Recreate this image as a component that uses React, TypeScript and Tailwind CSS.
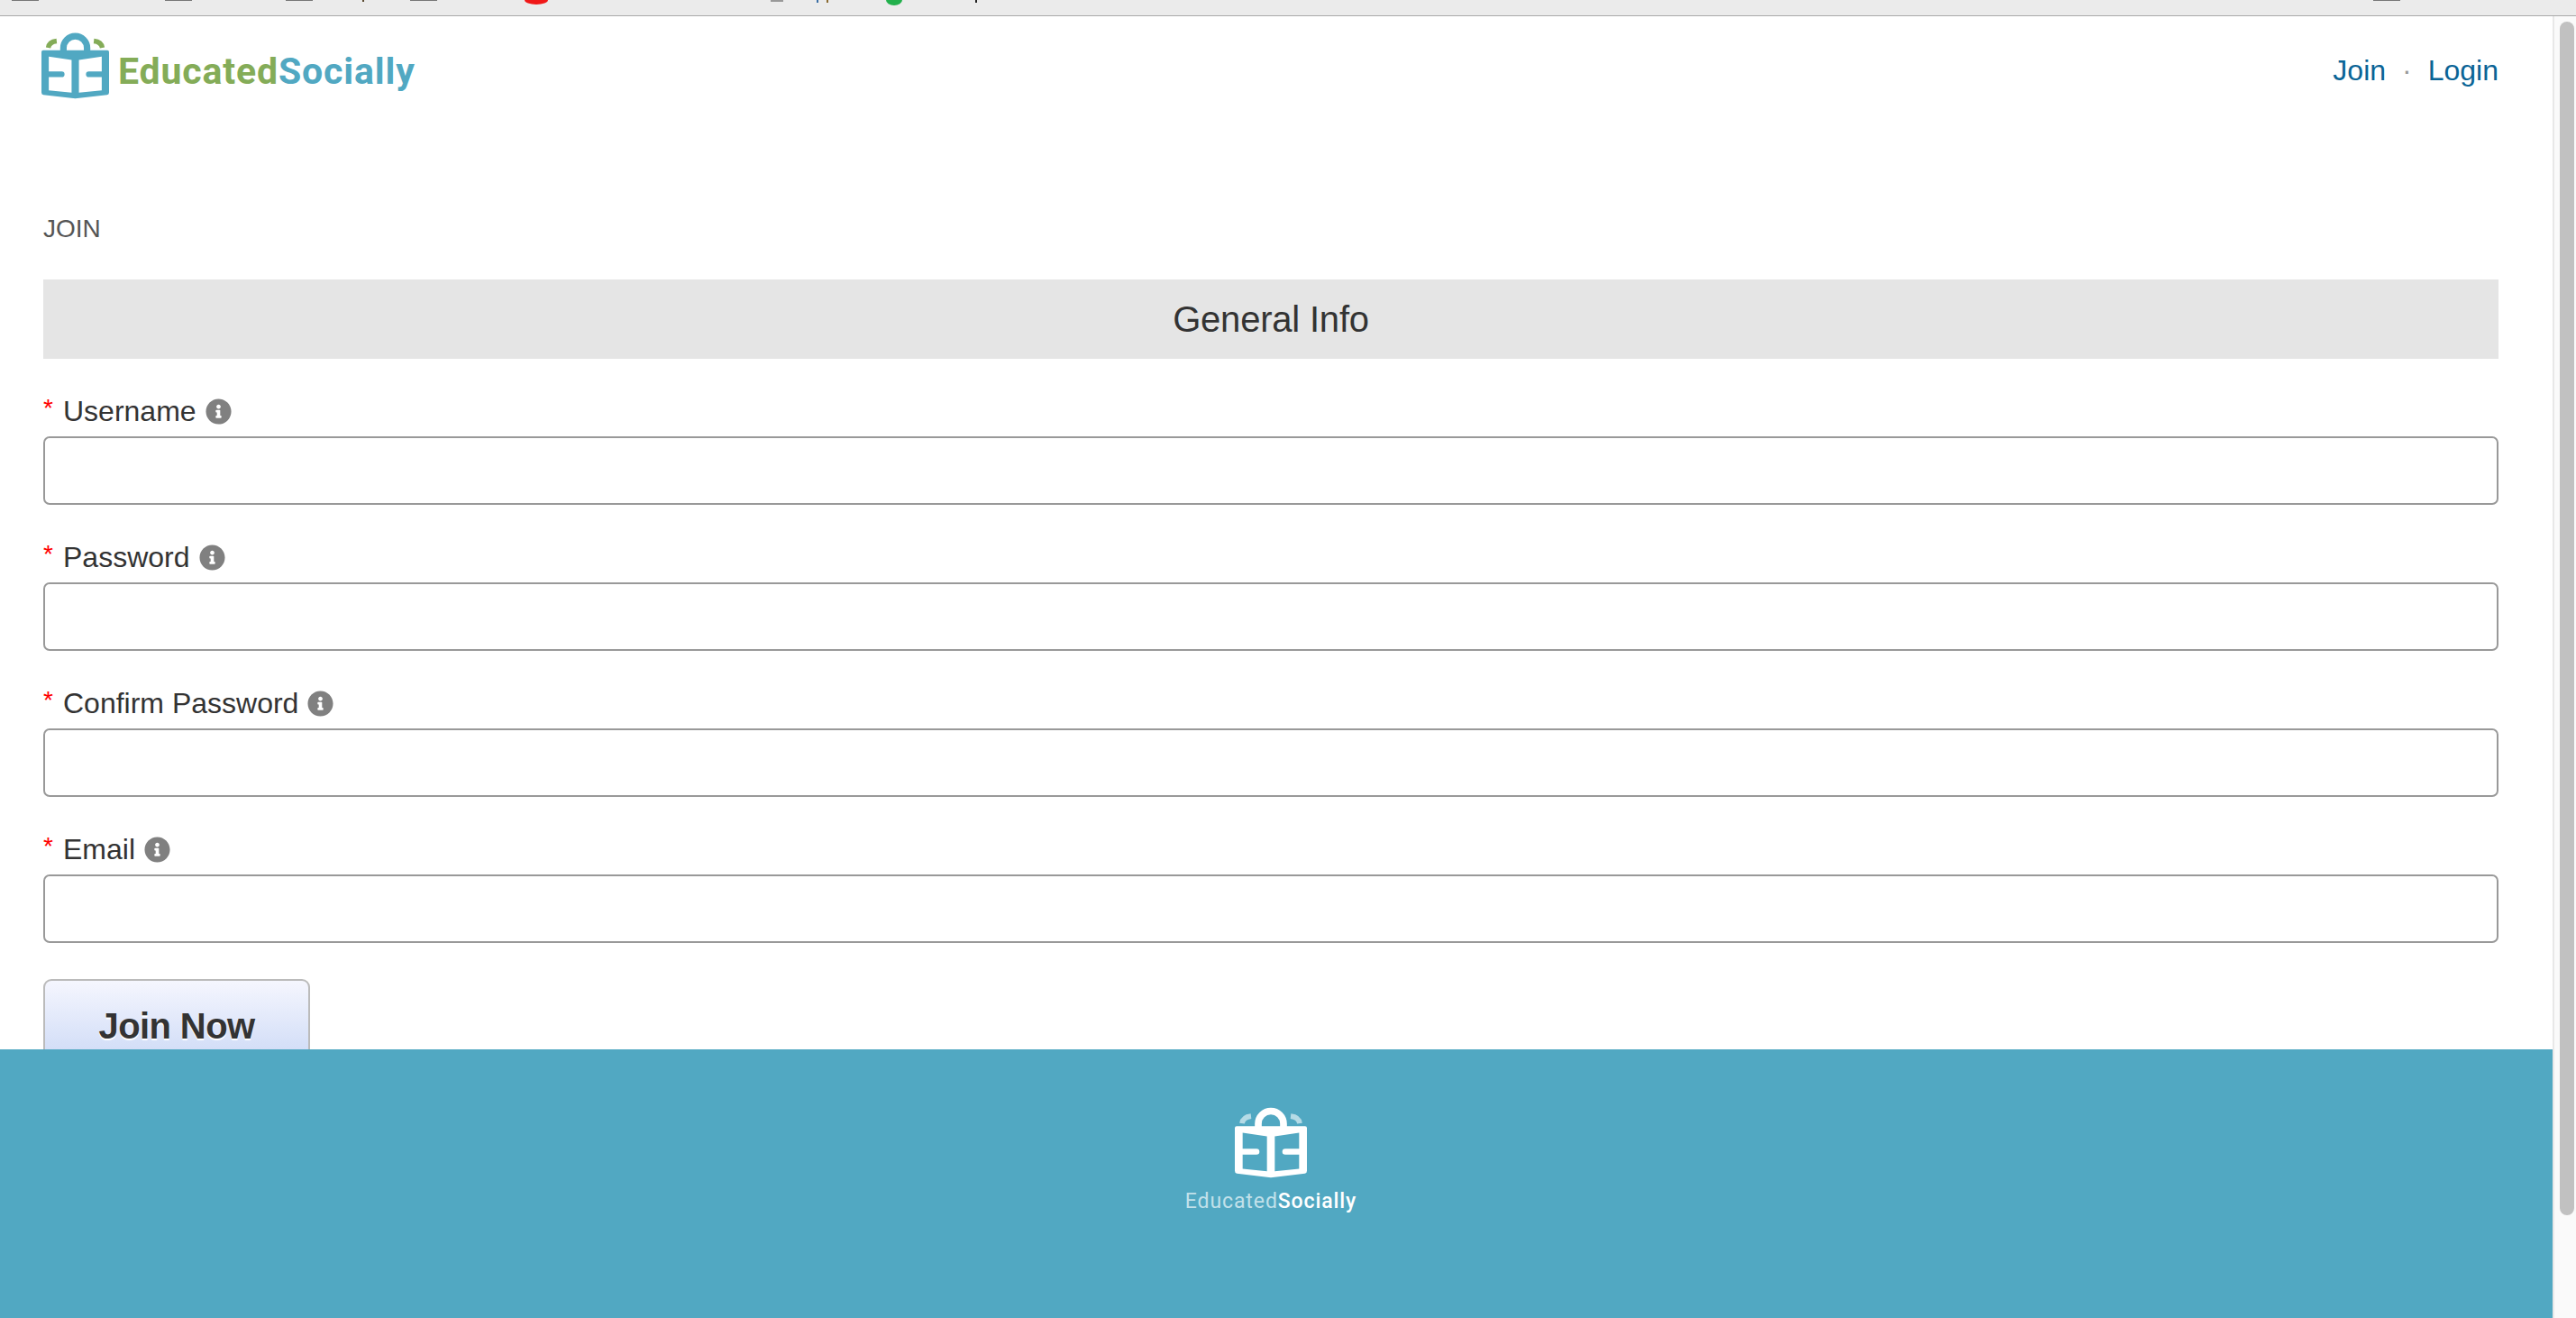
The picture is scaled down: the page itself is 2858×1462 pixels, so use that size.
import { FaInfoCircle } from "react-icons/fa";

function LogoMark({ main, accent, className }: { main: string; accent: string; className: string }) {
  return (
    <svg viewBox="0 0 240 236" className={className}>
      <path
        fillRule="evenodd"
        fill={main}
        d="M6 63 L234 63 Q240 63 240 69 L240 212 Q240 220 233 221 L120 234 L7 221 Q0 220 0 212 L0 69 Q0 63 6 63 Z M26 85 L107 97 L107 213 L26 205 Z M214 85 L133 97 L133 213 L214 205 Z"
      />
      <path d="M78 68 V55 A42 42 0 0 1 162 55 V68" fill="none" stroke={main} strokeWidth="23" />
      <path d="M26 148 H72 M214 148 H168" fill="none" stroke={main} strokeWidth="20" strokeLinecap="round" />
      <path d="M24 54 Q27 33 54 30 M216 54 Q213 33 186 30" fill="none" stroke={accent} strokeWidth="17" />
    </svg>
  );
}

function Field({ label }: { label: string }) {
  return (
    <div className="mb-[36px]">
      <label className="flex items-center h-[44px] mb-[6px] text-[32px] text-[#333333]">
        <span className="w-[22px] text-[28px] text-[#ff0000] -translate-y-[3px]">*</span>
        <span>{label}</span>
        <FaInfoCircle className="ml-[10px] w-[29px] h-[29px] text-[#808080]" />
      </label>
      <input
        type="text"
        className="block w-full h-[76px] bg-white border-2 border-[#999999] rounded-[7px] outline-none"
      />
    </div>
  );
}

export default function App() {
  return (
    <div className="flex flex-col w-[2858px] h-[1462px] overflow-hidden bg-white font-['Liberation_Sans',Arial,sans-serif]">
      {/* cut off browser toolbar */}
      <svg viewBox="0 0 2858 18" className="block w-[2858px] h-[18px] shrink-0">
        <rect width="2858" height="18" fill="#ebebeb" />
        <rect y="17" width="2858" height="1" fill="#a8a8a8" />
        <rect x="13" width="30" height="1" fill="#777777" />
        <rect x="183" width="30" height="1" fill="#777777" />
        <rect x="317" width="30" height="1" fill="#777777" />
        <rect x="455" width="30" height="1" fill="#777777" />
        <rect x="402" width="2" height="2" fill="#5a4a30" />
        <ellipse cx="595" cy="0" rx="13" ry="5" fill="#f01818" />
        <rect x="855" width="14" height="2" fill="#999999" />
        <rect x="906" width="2" height="3" fill="#3a6ea5" />
        <rect x="917" width="2" height="3" fill="#8a6a30" />
        <ellipse cx="992" cy="0" rx="9" ry="6" fill="#22b04c" />
        <rect x="1082" width="2" height="3" fill="#222222" />
        <rect x="2633" width="30" height="1" fill="#777777" />
      </svg>

      <div className="flex flex-1 min-h-0">
        <div className="flex flex-col w-[2832px] min-w-0">
          <main className="flex-1 min-h-0 overflow-hidden pl-[48px] pr-[60px]">
            <header className="flex justify-between h-[120px]">
              <div className="flex items-start -ml-[2px] pt-[18px]">
                <LogoMark main="#51a8c2" accent="#84ac58" className="w-[75px] h-[74px]" />
                <div className="ml-[10px] mt-[19px] text-[41px] leading-[48px] font-bold font-['Roboto',sans-serif] tracking-[0.85px]">
                  <span className="text-[#84ac58]">Educated</span>
                  <span className="text-[#51a8c2]">Socially</span>
                </div>
              </div>
              <nav className="flex items-start pt-[41px] text-[32px] leading-[38px] text-[#0a6496]">
                <a>Join</a>
                <span className="mx-[18px] text-[#999999]">·</span>
                <a>Login</a>
              </nav>
            </header>

            <h1 className="mt-[98px] text-[28px] leading-[36px] text-[#555555]">JOIN</h1>

            <div className="flex items-center justify-center mt-[38px] h-[88px] bg-[#e5e5e5] text-[40px] text-[#333333] tracking-[-0.2px]">
              General Info
            </div>

            <form className="mt-[36px]">
              <Field label="Username" />
              <Field label="Password" />
              <Field label="Confirm Password" />
              <Field label="Email" />
              <button
                type="button"
                className="block mt-[40px] w-[296px] h-[104px] border-2 border-[#bbbbbb] rounded-[9px] bg-gradient-to-b from-[#f5f6fe] to-[#c9d7f5] text-[40px] font-bold text-[#333333] tracking-[-0.6px] [text-shadow:0_2px_0_#ffffff]"
              >
                Join Now
              </button>
            </form>
          </main>

          <footer className="flex flex-col items-center shrink-0 h-[298px] pr-[12px] pt-[64px] bg-[#51a8c2]">
            <LogoMark main="#ffffff" accent="#b5dbe6" className="w-[80px] h-[79px]" />
            <div className="mt-[12px] text-[23px] leading-[28px] font-['Roboto',sans-serif] tracking-[0.9px]">
              <span className="text-[#c2e1ea]">Educated</span>
              <span className="font-medium text-white">Socially</span>
            </div>
          </footer>
        </div>

        {/* scrollbar */}
        <div className="flex-1 pt-[6px] pl-[6px] pr-[2px] bg-[#fafafa] border-l-2 border-[#e8e8e8]">
          <div className="w-[16px] h-[1324px] rounded-full bg-[#c1c1c1]" />
        </div>
      </div>
    </div>
  );
}
